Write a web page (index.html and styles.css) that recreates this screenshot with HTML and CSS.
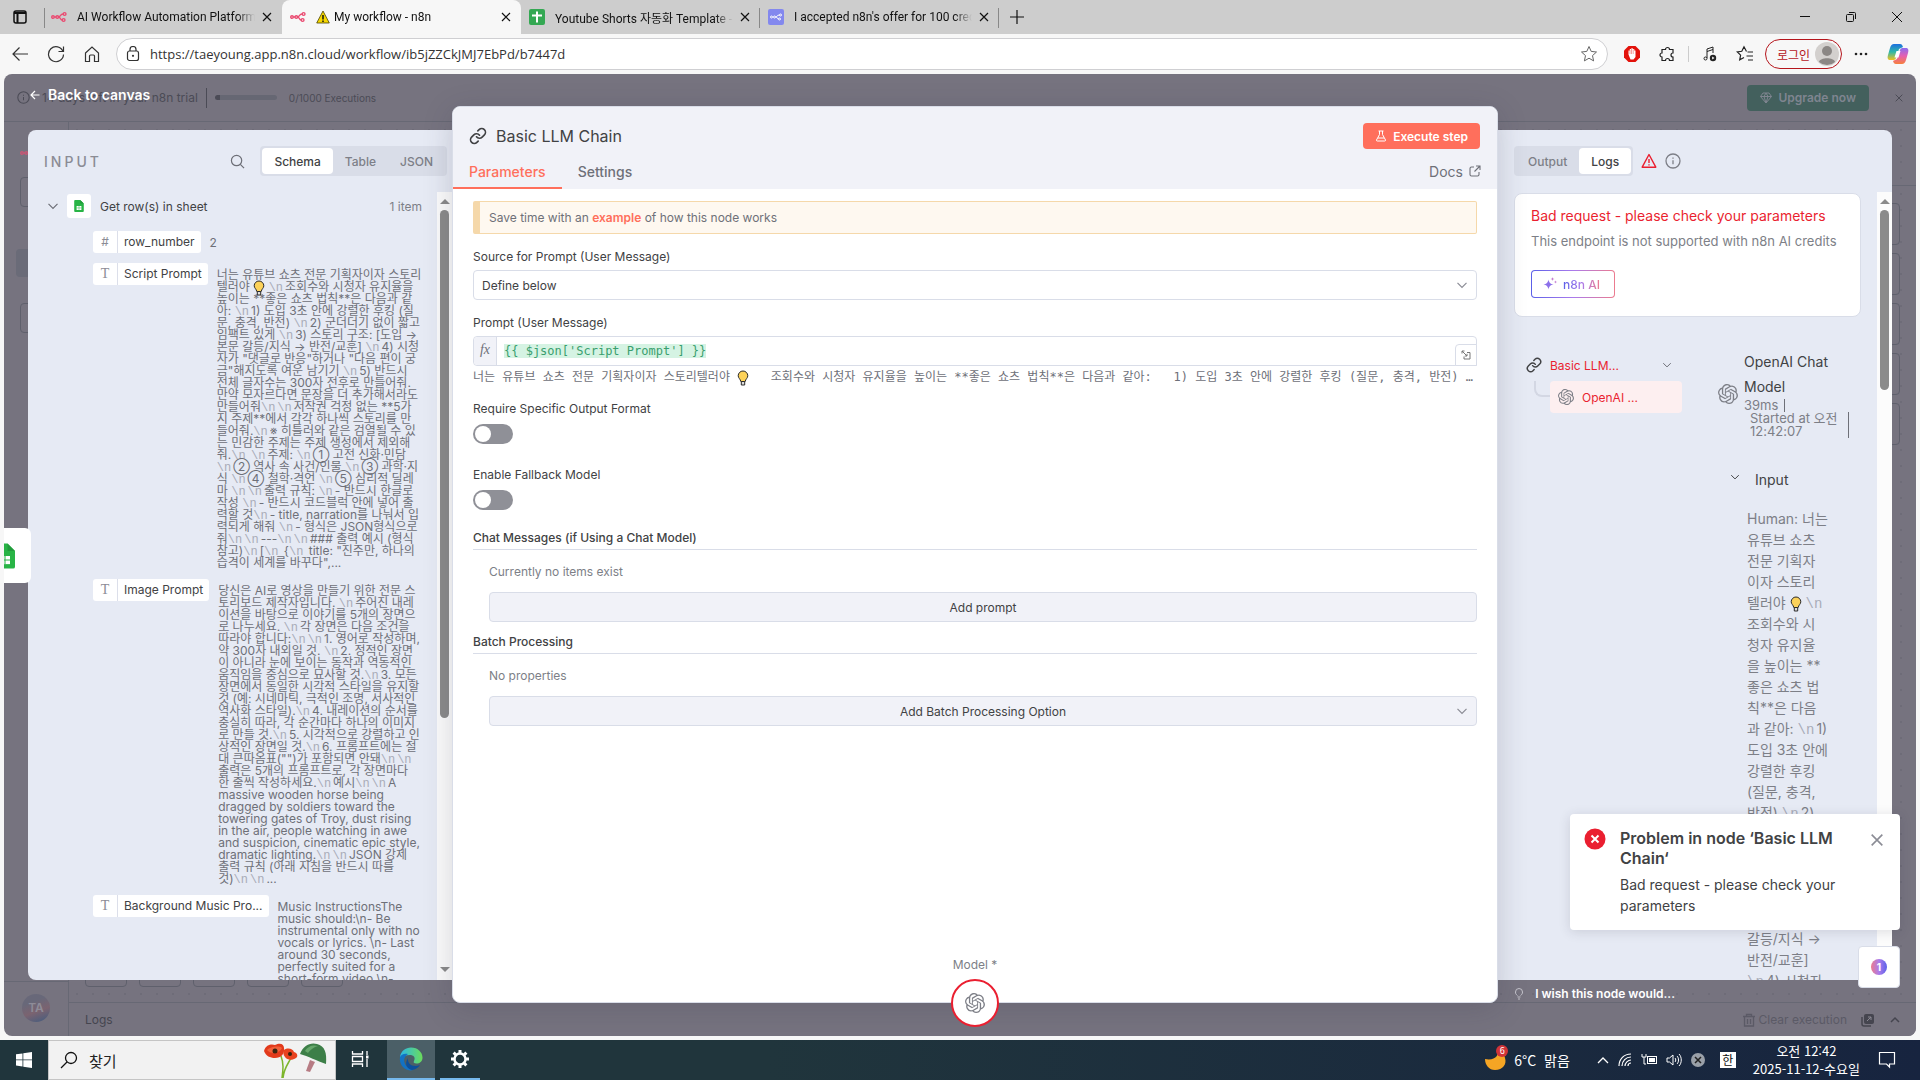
FILE: index.html
```html
<!DOCTYPE html>
<html lang="ko">
<head>
    <meta charset="UTF-8">
    <meta name="viewport" content="width=device-width, initial-scale=1.0">
    <title>My workflow - n8n</title>
    <link rel="stylesheet" href="styles.css">
</head>
<body>
    <!-- Shared icons -->
    <svg class="sprite" aria-hidden="true">
        <defs>
            <linearGradient id="aiGrad" x1="0" y1="0" x2="1" y2="0"><stop offset="0" stop-color="#5b60e8"/><stop offset=".5" stop-color="#aa7bec"/><stop offset="1" stop-color="#ec7b8e"/></linearGradient>
            <linearGradient id="edgeGrad" x1="0" y1="0" x2="1" y2="0"><stop offset="0" stop-color="#2bb7e8"/><stop offset="1" stop-color="#6bdc5a"/></linearGradient>
            <linearGradient id="copGrad" x1="0" y1="0" x2="0" y2="1"><stop offset="0" stop-color="#1c6fe0"/><stop offset=".5" stop-color="#2fb8a8"/><stop offset="1" stop-color="#f2c220"/></linearGradient>
            <linearGradient id="copGrad2" x1="0" y1="0" x2="0" y2="1"><stop offset="0" stop-color="#8a6cf0"/><stop offset=".5" stop-color="#e65fb0"/><stop offset="1" stop-color="#f7803c"/></linearGradient>
        </defs>
        <symbol id="n8n" viewBox="0 0 16 16"><g fill="none" stroke="#ea4b71" stroke-width="1.4"><circle cx="2" cy="8" r="1.3"/><circle cx="6.3" cy="8" r="1.3"/><circle cx="13.6" cy="5" r="1.4"/><circle cx="12.6" cy="11" r="1.4"/><path d="M3.3 8H5M7.6 8c2 0 1.6-3 4.6-3M7.6 8c2 0 1.4 3 3.6 3"/></g></symbol>
        <symbol id="sheet" viewBox="0 0 16 16"><rect width="16" height="16" rx="2" fill="#34a853"/><path d="M7 2.5h2v11H7zM3 5.5h10v2H3z" fill="#fff"/></symbol>
        <symbol id="gsheet" viewBox="0 0 16 20"><path d="M1.5 0H10l6 6v12.5a1.5 1.5 0 0 1-1.5 1.5h-13A1.5 1.5 0 0 1 0 18.5v-17A1.5 1.5 0 0 1 1.5 0z" fill="#28b446"/><path d="M10 0l6 6h-6z" fill="#219b3b"/><path d="M4 10h8v6.500H4z" fill="#fff"/><path d="M4 13.200h8M8 10v6.500" stroke="#28b446" stroke-width=".8"/></symbol>
        <symbol id="x" viewBox="0 0 12 12"><path d="M2 2l8 8M10 2l-8 8" fill="none" stroke="currentColor" stroke-width="1.2"/></symbol>
        <symbol id="down" viewBox="0 0 12 12"><path d="M1.500 3.800L6 8.300l4.500-4.500" fill="none" stroke="currentColor" stroke-width="1.200"/></symbol>
        <symbol id="link" viewBox="0 0 24 24"><g fill="none" stroke="currentColor" stroke-width="2.200" stroke-linecap="round"><path d="M10 13a5 5 0 0 0 7.540.540l3-3a5 5 0 0 0-7.070-7.070l-1.720 1.710"/><path d="M14 11a5 5 0 0 0-7.540-.540l-3 3a5 5 0 0 0 7.070 7.070l1.710-1.710"/></g></symbol>
        <symbol id="openai" viewBox="0 0 24 24"><path fill="currentColor" d="M22.2819 9.8211a5.9847 5.9847 0 0 0-.5157-4.9108 6.0462 6.0462 0 0 0-6.5098-2.9A6.0651 6.0651 0 0 0 4.9807 4.1818a5.9847 5.9847 0 0 0-3.9977 2.9 6.0462 6.0462 0 0 0 .7427 7.0966 5.98 5.98 0 0 0 .511 4.9107 6.051 6.051 0 0 0 6.5146 2.9001A5.9847 5.9847 0 0 0 13.2599 24a6.0557 6.0557 0 0 0 5.7718-4.2058 5.9894 5.9894 0 0 0 3.9977-2.9001 6.0557 6.0557 0 0 0-.7475-7.0729zm-9.022 12.6081a4.4755 4.4755 0 0 1-2.8764-1.0408l.1419-.0804 4.7783-2.7582a.7948.7948 0 0 0 .3927-.6813v-6.7369l2.02 1.1686a.071.071 0 0 1 .038.052v5.5826a4.504 4.504 0 0 1-4.4945 4.4944zm-9.6607-4.1254a4.4708 4.4708 0 0 1-.5346-3.0137l.142.0852 4.783 2.7582a.7712.7712 0 0 0 .7806 0l5.8428-3.3685v2.3324a.0804.0804 0 0 1-.0332.0615L9.74 19.9502a4.4992 4.4992 0 0 1-6.1408-1.6464zM2.3408 7.8956a4.485 4.485 0 0 1 2.3655-1.9728V11.6a.7664.7664 0 0 0 .3879.6765l5.8144 3.3543-2.0201 1.1685a.0757.0757 0 0 1-.071 0l-4.8303-2.7865A4.504 4.504 0 0 1 2.3408 7.872zm16.5963 3.8558L13.1038 8.364 15.1192 7.2a.0757.0757 0 0 1 .071 0l4.8303 2.7913a4.4944 4.4944 0 0 1-.6765 8.1042v-5.6772a.79.79 0 0 0-.407-.667zm2.0107-3.0231l-.142-.0852-4.7735-2.7818a.7759.7759 0 0 0-.7854 0L9.409 9.2297V6.8974a.0662.0662 0 0 1 .0284-.0615l4.8303-2.7866a4.4992 4.4992 0 0 1 6.6802 4.66zM8.3065 12.863l-2.02-1.1638a.0804.0804 0 0 1-.038-.0567V6.0742a4.4992 4.4992 0 0 1 7.3757-3.4537l-.142.0805L8.704 5.459a.7948.7948 0 0 0-.3927.6813zm1.0976-2.3654l2.602-1.4998 2.6069 1.4998v2.9994l-2.5974 1.4997-2.6067-1.4997Z"/></symbol>
        <symbol id="bulb" viewBox="0 0 12 16"><path d="M6 1a4.800 4.800 0 0 1 4.800 4.800c0 2.200-2.200 3.200-2.600 5.700H3.800C3.400 9 1.200 8 1.200 5.800A4.800 4.800 0 0 1 6 1z" fill="#fcd25a" stroke="#2a2a2a"/><path d="M4.300 11.500h3.400v3.500H4.300z" fill="#ddd" stroke="#2a2a2a"/></symbol>
        <symbol id="info" viewBox="0 0 16 16"><g fill="none" stroke="currentColor" stroke-width="1.300"><circle cx="8" cy="8" r="7"/><path d="M8 7.300v4M8 4.500v1.300"/></g></symbol>
        <symbol id="search" viewBox="0 0 16 16"><g fill="none" stroke="currentColor" stroke-width="1.300"><circle cx="7" cy="7" r="5.500"/><path d="M11 11l4 4"/></g></symbol>
    </svg>

    <div class="browser">
        <!-- Tab strip -->
        <div class="tabstrip">
            <button class="tab-actions" aria-label="Tab actions"><svg width="14" height="14" viewBox="0 0 14 14"><rect x="1" y="1" width="12" height="12" rx="2" fill="none" stroke="#111" stroke-width="1.500"/><path d="M1 3h12M4.500 3v10" stroke="#111" stroke-width="2"/></svg></button>
            <div class="btab first">
                <svg class="fav"><use href="#n8n"/></svg><span class="btab-title">AI Workflow Automation Platform</span>
                <button aria-label="Close tab"><svg><use href="#x"/></svg></button>
            </div>
            <div class="btab current">
                <svg class="fav"><use href="#n8n"/></svg>
                <svg class="warn" viewBox="0 0 14 14"><path d="M7 1l6.300 12H.7z" fill="#f7d800" stroke="#4a4200" stroke-width=".8"/><path d="M7 5v4.500M7 10.500v1.500" stroke="#111" stroke-width="1.500"/></svg>
                <span class="btab-title">My workflow - n8n</span>
                <button aria-label="Close tab"><svg><use href="#x"/></svg></button>
            </div>
            <div class="btab">
                <svg class="fav"><use href="#sheet"/></svg><span class="btab-title">Youtube Shorts 자동화 Template - </span>
                <button aria-label="Close tab"><svg><use href="#x"/></svg></button>
            </div>
            <div class="btab">
                <svg class="fav" viewBox="0 0 16 16"><rect width="16" height="16" rx="2" fill="#8388ee"/><g fill="none" stroke="#fff"><circle cx="3.500" cy="8" r="1"/><circle cx="6.500" cy="8" r="1"/><circle cx="12.500" cy="6" r="1"/><circle cx="11.500" cy="10" r="1"/><path d="M7.500 8c2 0 1-2 4-2M8 8c1.500 0 1 2 2.500 2"/></g></svg>
                <span class="btab-title">I accepted n8n's offer for 100 credits</span>
                <button aria-label="Close tab"><svg><use href="#x"/></svg></button>
            </div>
            <button class="new-tab" aria-label="New tab"><svg width="16" height="16" viewBox="0 0 16 16"><path d="M8 1v14M1 8h14" stroke="#111" stroke-width="1.200"/></svg></button>
            <div class="win-controls">
                <button aria-label="Minimize"><svg width="12" height="12" viewBox="0 0 12 12"><path d="M1 5.500h10" stroke="#111"/></svg></button>
                <button aria-label="Restore"><svg width="12" height="12" viewBox="0 0 12 12"><g fill="none" stroke="#111"><rect x="1.500" y="3.500" width="7" height="7" rx="1"/><path d="M4 1.500h5.500a1 1 0 0 1 1 1V8"/></g></svg></button>
                <button aria-label="Close"><svg width="12" height="12" viewBox="0 0 12 12"><path d="M1 1l10 10M11 1L1 11" stroke="#111"/></svg></button>
            </div>
        </div>

        <!-- Address bar -->
        <div class="toolbar">
            <div class="nav-buttons">
                <button aria-label="Back"><svg viewBox="0 0 18 18"><path d="M17 9H2M8.500 2.500L2 9l6.500 6.500"/></svg></button>
                <button aria-label="Reload"><svg viewBox="0 0 18 18"><path d="M16 6.500A7.500 7.500 0 1 0 16.500 9.500M16.500 1.500v5h-5"/></svg></button>
                <button aria-label="Home"><svg viewBox="0 0 18 18"><path d="M2.500 8L9 2l6.500 6v8.500h-4V11a1 1 0 0 0-1-1h-3a1 1 0 0 0-1 1v5.500h-4z"/></svg></button>
            </div>
            <div class="address">
                <svg width="14" height="16" viewBox="0 0 14 16"><g fill="none" stroke="#333" stroke-width="1.200"><rect x="1.500" y="5" width="11" height="9.500" rx="2"/><path d="M4 5V3.500a3 3 0 0 1 6 0V5"/></g><circle cx="7" cy="9.800" r="1.100" fill="#333"/></svg>
                <input type="text" aria-label="Address" value="https://taeyoung.app.n8n.cloud/workflow/ib5jZZCkJMJ7EbPd/b7447d">
                <svg width="18" height="18" viewBox="0 0 18 18"><path d="M9 1.500l2.200 4.900 5.300.6-4 3.600 1.100 5.300L9 13.200l-4.600 2.700 1.100-5.300-4-3.600 5.300-.6z" fill="none" stroke="#666"/></svg>
            </div>
            <div class="extensions">
                <svg width="18" height="18" viewBox="0 0 18 18"><path d="M5.500 1h7L17 5.500v7L12.500 17h-7L1 12.500v-7z" fill="#e3120b"/><path d="M5.500 9.500V5.500h1.300V4h1.500v-.800h1.500V4h1.500v1.500h1.200V12l-2 2.500h-3z" fill="#fff"/><path d="M7 5v4M8.500 4v5M10.200 4.500V9" stroke="#e3120b" stroke-width=".4"/></svg>
                <svg width="18" height="18" viewBox="0 0 18 18"><path d="M3 4.500h3.500a2 2 0 1 1 4 0H14V8a2 2 0 0 0 0 4v3.500h-3.500a2 2 0 0 0-4 0H3V12a2 2 0 0 1 0-4z" fill="none" stroke="#222" stroke-width="1.200"/></svg>
                <i class="bar-sep"></i>
                <svg width="18" height="18" viewBox="0 0 18 18"><g fill="none" stroke="#222"><path d="M7 13V4l6-2v6M7 6.500l6-2"/><circle cx="5.500" cy="13.500" r="1.500"/></g><circle cx="13" cy="13" r="3.200" fill="#222"/><path d="M12.200 11.500v3l2.300-1.500z" fill="#fff"/></svg>
                <svg width="18" height="18" viewBox="0 0 18 18"><path d="M10.500 6.500L8 1.800 5.800 6.300l-4.500.6 3.300 3.200-.9 4.700L8 12.500M11.500 7H17M10.500 11H17M12 15h5" fill="none" stroke="#222" stroke-width="1.200"/></svg>
                <button class="login">로그인 <svg width="24" height="24" viewBox="0 0 24 24"><circle cx="12" cy="12" r="12" fill="#d3d0ce"/><circle cx="12" cy="9" r="5" fill="#8b8785"/><path d="M4 20c1-5 15-5 16 0a12 12 0 0 1-16 0z" fill="#8b8785"/></svg></button>
                <svg width="16" height="16" viewBox="0 0 16 16"><g fill="#222"><circle cx="3" cy="8" r="1.300"/><circle cx="8" cy="8" r="1.300"/><circle cx="13" cy="8" r="1.300"/></g></svg>
                <svg width="22" height="22" viewBox="0 0 22 22"><path d="M7 1h6c2 0 2.500 1.500 3 3l-4 2-3 9c-.5 1.500-1.500 2-3 2H3c-2 0-3-1.500-2-5l2-7c.8-2.500 2-4 4-4z" fill="url(#copGrad)"/><path d="M15 21H9c-2 0-2.500-1.500-3-3l4-2 3-9c.5-1.500 1.500-2 3-2h3c2 0 3 1.500 2 5l-2 7c-.8 2.500-2 4-4 4z" fill="url(#copGrad2)"/><path d="M9.500 8h4l-2 6.500h-4z" fill="#fff"/></svg>
            </div>
        </div>

        <!-- Page -->
        <div class="page">
            <!-- Dimmed editor behind the modal -->
            <div class="editor">
                <div class="trial">
                    <svg class="trial-info"><use href="#info"/></svg>
                    <span class="trial-text">14 days left in your n8n trial</span>
                    <span class="trial-sep"></span>
                    <span class="trial-progress"></span>
                    <span class="trial-count">0/1000 Executions</span>
                    <button class="upgrade"><svg width="12" height="12" viewBox="0 0 12 12"><path d="M3 1h6l2.500 3.500L6 11 .5 4.500zM.5 4.500h11M4 4.500L6 11l2-6.500L6 1z" fill="none" stroke="currentColor"/></svg>Upgrade now</button>
                    <button class="trial-close" aria-label="Dismiss"><svg><use href="#x"/></svg></button>
                </div>
                <div class="editor-body">
                    <div class="sidebar">
                        <svg class="side-logo"><use href="#n8n"/></svg>
                        <i class="side-box"></i>
                        <i class="side-active"></i>
                        <i class="side-box"></i>
                        <div class="side-user"><span>TA</span></div>
                    </div>
                    <div class="canvas">
                        <div class="canvas-right"><i></i><i></i><i></i><i></i><i></i></div>
                        <div class="canvas-tools"><i></i><i></i><i></i><i></i><i></i></div>
                        <div class="logs-bar">
                            <span>Logs</span>
                            <button class="clear"><svg width="14" height="14" viewBox="0 0 14 14"><path d="M1 3.500h12M4.500 3.500v-2h5v2M2.500 3.500v9.500h9V3.500M5.500 6v5M8.500 6v5" fill="none" stroke="currentColor" stroke-width="1.300"/></svg>Clear execution</button>
                            <svg width="14" height="14" viewBox="0 0 14 14"><rect x="3" y="1" width="10" height="10" rx="2" fill="#45454f"/><path d="M1 4v7a2 2 0 0 0 2 2h7" fill="none" stroke="#45454f" stroke-width="1.500"/><path d="M6 8l4-4M7 4h3v3" stroke="#8a8892" fill="none"/></svg>
                            <svg width="12" height="12" viewBox="0 0 12 12"><path d="M2 8l4-4 4 4" fill="none" stroke="#45454f" stroke-width="1.500"/></svg>
                        </div>
                    </div>
                </div>
            </div>

            <a class="back" href="#"><svg width="10" height="10" viewBox="0 0 10 10"><path d="M9.500 5H1M5 1L1 5l4 4" fill="none" stroke="#fff" stroke-width="1.200"/></svg>Back to canvas</a>
            <button class="prev-node" aria-label="Get row(s) in sheet"><svg width="20" height="28"><use href="#gsheet"/></svg></button>

            <div class="modal">
                <!-- Input panel -->
                <section class="side-panel input-panel">
                    <div class="panel-head">
                        <h2>INPUT</h2>
                        <svg class="icon-search"><use href="#search"/></svg>
                        <div class="radios"><button class="on">Schema</button><button>Table</button><button>JSON</button></div>
                    </div>
                    <div class="panel-scroll">
                        <div class="schema">
                            <div class="schema-node">
                                <svg class="chev"><use href="#down"/></svg>
                                <span class="node-icon"><svg width="10" height="12"><use href="#gsheet"/></svg></span>
                                <span class="node-name">Get row(s) in sheet</span>
                                <span class="items">1 item</span>
                            </div>
                            <div class="row"><span class="pill"><i>#</i><b>row_number</b></span><p>2</p></div>
                            <div class="row"><span class="pill"><i class="type">T</i><b>Script Prompt</b></span>
                                <p>너는 유튜브 쇼츠 전문 기획자이자 스토리<br>
                                텔러야 <svg class="bulb"><use href="#bulb"/></svg> <s>\n</s>조회수와 시청자 유지율을<br>
                                높이는 **좋은 쇼츠 법칙**은 다음과 같<br>
                                아: <s>\n</s>1) 도입 3초 안에 강렬한 후킹 (질<br>
                                문, 충격, 반전) <s>\n</s>2) 군더더기 없이 짧고<br>
                                임팩트 있게 <s>\n</s>3) 스토리 구조: [도입 →<br>
                                본문 갈등/지식 → 반전/교훈] <s>\n</s>4) 시청<br>
                                자가 "댓글로 반응"하거나 "다음 편이 궁<br>
                                금"해지도록 여운 남기기 <s>\n</s>5) 반드시<br>
                                전체 글자수는 300자 전후로 만들어줘.<br>
                                만약 모자르다면 문장을 더 추가해서라도<br>
                                만들어줘<s>\n</s><s>\n</s>저작권 걱정 없는 **5가<br>
                                지 주제**에서 각각 하나씩 스토리를 만<br>
                                들어줘.<s>\n</s>※ 히틀러와 같은 검열될 수 있<br>
                                는 민감한 주제는 주제 생성에서 제외해<br>
                                줘.<s>\n</s> <s>\n</s>주제: <s>\n</s>① 고전 신화·민담<br>
                                <s>\n</s>② 역사 속 사건/인물 <s>\n</s>③ 과학·지<br>
                                식 <s>\n</s>④ 철학·격언 <s>\n</s>⑤ 심리적 딜레<br>
                                마 <s>\n</s><s>\n</s>출력 규칙: <s>\n</s>- 반드시 한글로<br>
                                작성 <s>\n</s>- 반드시 코드블럭 안에 넣어 출<br>
                                력할 것<s>\n</s>- title, narration를 나눠서 입<br>
                                력되게 해줘 <s>\n</s>- 형식은 JSON형식으로<br>
                                줘<s>\n</s><s>\n</s>---<s>\n</s><s>\n</s>### 출력 예시 (형식<br>
                                참고)<s>\n</s>[<s>\n</s> {<s>\n</s> title: "진주만, 하나의<br>
                                습격이 세계를 바꾸다",...</p>
                            </div>
                            <div class="row"><span class="pill"><i class="type">T</i><b>Image Prompt</b></span>
                                <p>당신은 AI로 영상을 만들기 위한 전문 스<br>
                                토리보드 제작자입니다. <s>\n</s>주어진 내레<br>
                                이션을 바탕으로 이야기를 5개의 장면으<br>
                                로 나누세요. <s>\n</s>각 장면은 다음 조건을<br>
                                따라야 합니다:<s>\n</s><s>\n</s>1. 영어로 작성하며,<br>
                                약 300자 내외일 것. <s>\n</s>2. 정적인 장면<br>
                                이 아니라 눈에 보이는 동작과 역동적인<br>
                                움직임을 중심으로 묘사할 것.<s>\n</s>3. 모든<br>
                                장면에서 동일한 시각적 스타일을 유지할<br>
                                것 (예: 시네마틱, 극적인 조명, 서사적인<br>
                                역사화 스타일).<s>\n</s>4. 내레이션의 순서를<br>
                                충실히 따라, 각 순간마다 하나의 이미지<br>
                                로 만들 것.<s>\n</s>5. 시각적으로 강렬하고 인<br>
                                상적인 장면일 것.<s>\n</s>6. 프롬프트에는 절<br>
                                대 큰따옴표("")가 포함되면 안돼<s>\n</s><s>\n</s><br>
                                출력은 5개의 프롬프트로, 각 장면마다<br>
                                한 줄씩 작성하세요.<s>\n</s>예시<s>\n</s><s>\n</s>A<br>
                                massive wooden horse being<br>
                                dragged by soldiers toward the<br>
                                towering gates of Troy, dust rising<br>
                                in the air, people watching in awe<br>
                                and suspicion, cinematic epic style,<br>
                                dramatic lighting.<s>\n</s><s>\n</s>JSON 강제<br>
                                출력 규칙 (아래 지침을 반드시 따를<br>
                                것)<s>\n</s><s>\n</s>...</p>
                            </div>
                            <div class="row"><span class="pill"><i class="type">T</i><b>Background Music Pro...</b></span>
                                <p>Music InstructionsThe<br>music should:\n- Be<br>instrumental only with no<br>vocals or lyrics. \n- Last<br>around 30 seconds,<br>perfectly suited for a<br>short-form video.\n-</p>
                            </div>
                        </div>
                        <div class="scrollbar"><i class="up"></i><i class="thumb thumb-long"></i><i class="dn"></i></div>
                    </div>
                </section>

                <!-- Node parameters -->
                <section class="node-panel">
                    <div class="node-head">
                        <div class="node-title">
                            <svg width="18" height="18"><use href="#link"/></svg>
                            <h1>Basic LLM Chain</h1>
                            <button class="execute"><svg width="12" height="12" viewBox="0 0 12 12"><path d="M3.500 1h5M4.500 1v3.500L1.500 10a.8.8 0 0 0 .7 1h7.600a.8.8 0 0 0 .7-1L7.500 4.500V1M3 8h6" fill="none" stroke="currentColor"/></svg>Execute step</button>
                        </div>
                        <div class="node-tabs">
                            <button class="on">Parameters</button><button>Settings</button>
                            <a href="#">Docs <svg width="12" height="12" viewBox="0 0 12 12"><path d="M5 2H2.500A1.500 1.500 0 0 0 1 3.500v6A1.500 1.500 0 0 0 2.500 11h6A1.500 1.500 0 0 0 10 9.500V7M7 1h4v4M11 1L5.500 6.500" fill="none" stroke="currentColor" stroke-width="1.100"/></svg></a>
                        </div>
                    </div>
                    <form class="node-body">
                        <div class="notice">Save time with an <a href="#">example</a> of how this node works</div>
                        <div class="field">
                            <label for="source">Source for Prompt (User Message)</label>
                            <div class="select-wrap"><select id="source"><option>Define below</option></select><svg><use href="#down"/></svg></div>
                        </div>
                        <div class="field">
                            <label for="prompt">Prompt (User Message)</label>
                            <div class="expression">
                                <span class="fx">fx</span>
                                <input id="prompt" type="text" value="{{ $json['Script Prompt'] }}">
                                <button type="button" aria-label="Expand"><svg width="10" height="10" viewBox="0 0 10 10"><path d="M6 2.500h3v6.500H3V6.500M1 3.500V1h2.500M1 1l5 5M6 3.800V6H3.800" fill="none" stroke="#777"/></svg></button>
                            </div>
                            <div class="preview">너는 유튜브 쇼츠 전문 기획자이자 스토리텔러야 <svg class="bulb"><use href="#bulb"/></svg>   조회수와 시청자 유지율을 높이는 **좋은 쇼츠 법칙**은 다음과 같아:   1) 도입 3초 안에 강렬한 후킹 (질문, 충격, 반전)   2) 군더더기 없이 짧고 임팩트 있게</div>
                        </div>
                        <div class="field">
                            <label for="format">Require Specific Output Format</label>
                            <input class="toggle" id="format" type="checkbox">
                        </div>
                        <div class="field">
                            <label for="fallback">Enable Fallback Model</label>
                            <input class="toggle" id="fallback" type="checkbox">
                        </div>
                        <div class="group">
                            <h3>Chat Messages (if Using a Chat Model)</h3>
                            <p>Currently no items exist</p>
                            <button class="add" type="button">Add prompt</button>
                        </div>
                        <div class="group">
                            <h3 id="batch">Batch Processing</h3>
                            <p>No properties</p>
                            <div class="select-wrap add-select"><select aria-labelledby="batch"><option>Add Batch Processing Option</option></select><svg><use href="#down"/></svg></div>
                        </div>
                    </form>
                    <div class="model"><span>Model *</span><button aria-label="OpenAI Chat Model"><svg width="20" height="20"><use href="#openai"/></svg></button></div>
                </section>

                <!-- Output panel -->
                <section class="side-panel output-panel">
                    <div class="panel-head">
                        <div class="radios"><button>Output</button><button class="on">Logs</button></div>
                        <svg class="alert" width="16" height="16" viewBox="0 0 16 16"><path d="M8 1.500l6.800 12.700H1.200zM8 6v4M8 11.300v1.300" fill="none" stroke="#ea1f30" stroke-width="1.400" stroke-linejoin="round"/></svg>
                        <svg class="icon-info"><use href="#info"/></svg>
                    </div>
                    <div class="panel-scroll">
                        <div class="logs">
                            <div class="error-card">
                                <h3>Bad request - please check your parameters</h3>
                                <p>This endpoint is not supported with n8n AI credits</p>
                                <button><svg width="14" height="14" viewBox="0 0 14 14"><path d="M5.500 2.500c.7 3.300 1.700 4.300 5 5-3.300.7-4.300 1.700-5 5-.7-3.300-1.700-4.300-5-5 3.300-.7 4.300-1.700 5-5z" fill="#8c70ea"/><path d="M9.500 0c.2 1.300.7 1.800 2 2-1.300.2-1.800.7-2 2-.2-1.300-.7-1.800-2-2 1.300-.2 1.800-.7 2-2zM12.500 3.500l.4 1.100 1.100.4-1.100.4-.4 1.100-.4-1.100-1.100-.4 1.100-.4z" fill="#c47bd0"/></svg><span>n8n AI</span></button>
                            </div>
                            <div class="log-view">
                                <div class="tree">
                                    <div class="tree-row"><svg width="16" height="16"><use href="#link"/></svg><span>Basic LLM...</span><svg class="tree-chev"><use href="#down"/></svg></div>
                                    <div class="tree-child"><i></i><div><svg width="16" height="16"><use href="#openai"/></svg><span>OpenAI ...</span></div></div>
                                </div>
                                <div class="details">
                                    <div class="details-head">
                                        <svg width="20" height="20"><use href="#openai"/></svg>
                                        <div>
                                            <h4>OpenAI Chat Model</h4>
                                            <div class="took">39ms</div>
                                            <div class="started">Started at 오전 12:42:07</div>
                                        </div>
                                    </div>
                                    <div class="io"><svg class="tree-chev"><use href="#down"/></svg>Input</div>
                                    <p>Human: 너는<br>유튜브 쇼츠<br>전문 기획자<br>이자 스토리<br>텔러야 <svg class="bulb"><use href="#bulb"/></svg> <s>\n</s><br>조회수와 시<br>청자 유지율<br>을 높이는 **<br>좋은 쇼츠 법<br>칙**은 다음<br>과 같아: <s>\n</s>1)<br>도입 3초 안에<br>강렬한 후킹<br>(질문, 충격,<br>반전) <s>\n</s>2)<br>군더더기 없<br>이 짧고 임팩<br>트 있게 <s>\n</s><br>3) 스토리 구<br>조: [도입 →<br>갈등/지식 →<br>반전/교훈]<br><s>\n</s>4) 시청자</p>
                                </div>
                            </div>
                        </div>
                        <div class="scrollbar"><i class="up"></i><i class="thumb thumb-short"></i></div>
                    </div>
                </section>
            </div>

            <a class="wish" href="#"><svg width="10" height="12" viewBox="0 0 10 12"><path d="M3.500 7.500C2 6.500 1.500 5.500 1.500 4a3.500 3.500 0 0 1 7 0c0 1.500-.5 2.500-2 3.500M3.500 9h3M4 11h2" fill="none" stroke="currentColor"/></svg>I wish this node would...</a>

            <div class="toast" role="alert">
                <svg width="22" height="22" viewBox="0 0 22 22"><circle cx="11" cy="11" r="10.500" fill="#ea1f30"/><path d="M7.500 7.500l7 7M14.500 7.500l-7 7" stroke="#fff" stroke-width="2"/></svg>
                <div><h2>Problem in node ‘Basic LLM Chain‘</h2><p>Bad request - please check your parameters</p></div>
                <button aria-label="Close"><svg><use href="#x"/></svg></button>
            </div>
            <button class="assistant" aria-label="Assistant"><span>1</span></button>
        </div>

        <!-- Windows taskbar -->
        <div class="taskbar">
            <button class="start" aria-label="Start"><svg width="16" height="16" viewBox="0 0 16 16"><path d="M0 2.300l6.500-.9v6.100H0zM7.300 1.200L16 0v7.500H7.300zM0 8.300h6.500v6.200L0 13.600zM7.300 8.300H16V16l-8.700-1.200z" fill="#fff"/></svg></button>
            <div class="find">
                <svg width="18" height="18" viewBox="0 0 18 18"><g fill="none" stroke="#111" stroke-width="1.300"><circle cx="11" cy="7" r="5.500"/><path d="M7 11l-6 6"/></g></svg>
                <input type="text" aria-label="찾기" placeholder="찾기">
                <svg width="66" height="36" viewBox="0 0 66 36"><path d="M18 14c3 8 2 14 1 22M28 16c-3 6-7 10-8 20" fill="none" stroke="#7cb52b" stroke-width="1.500"/><path d="M1 9C3 2 9 2 12 3c6-3 9 0 9 3 1 6-3 10-9 10C7 16 3 14 1 9z" fill="#e23a1c"/><path d="M4 8c3-3 12-5 15-2-2 5-11 7-15 2z" fill="#f2603a"/><circle cx="12" cy="9" r="2.500" fill="#3b2410"/><path d="M21 8c4-3 9-1 10 2 4 1 4 5 2 6-4 3-9 2-11-1-2-2-2-5-1-7z" fill="#e8421f"/><circle cx="27" cy="12" r="2" fill="#33230f"/><path d="M47 18l5 2-5 10-4-1z" fill="#b77c84"/><path d="M37 12C40 4 47 0 54 2c8 2 10 9 9 20-9-3-18-8-26-10z" fill="#3d7f48"/><path d="M42 9c4-6 9-6 13-5-4 1-8 4-10 7z" fill="#67a86c"/></svg>
            </div>
            <button class="task" aria-label="Task view"><svg width="18" height="18" viewBox="0 0 18 18"><path d="M1.500 1v3h10V1M1.500 17v-3h10v3M1.500 6.500h10v5h-10zM16 1v4M16 9v8" fill="none" stroke="#fff" stroke-width="1.300"/><path d="M15 5.500h2.500v3H15z" fill="#fff"/></svg></button>
            <button class="task open" aria-label="Edge"><svg width="24" height="24" viewBox="0 0 24 24"><path d="M1 10C2 4 6.500.5 12 .5c7 0 11.500 5 11.500 10 0 4-3 6-6 6-2.500 0-3.500-1-2.500-2.500C17 10 14 8 11 8c-4 0-8 2-10 2z" fill="url(#edgeGrad)"/><path d="M1 10C3 6 7 6.500 9 7c-3 2-4.500 5-3.500 8.500 1 4 5 7 9.500 7-2 1-4 1.200-6 .5C3.500 21.500 0 16 1 10z" fill="#1372c4"/><path d="M9 11c-1 6 5 10 12 7-2 3-5 4.700-8 5-5-1-8-6-4-12z" fill="#0d4f9b"/></svg></button>
            <button class="task running" aria-label="Settings"><svg width="20" height="20" viewBox="0 0 20 20"><circle cx="10" cy="10" r="5.500" fill="none" stroke="#fff" stroke-width="2.500"/><path d="M10 1v3M10 16v3M1 10h3M16 10h3M3.600 3.600l2.200 2.200M14.200 14.200l2.200 2.200M16.400 3.600l-2.200 2.200M5.800 14.200l-2.200 2.200" stroke="#fff" stroke-width="3"/></svg></button>
            <div class="tray">
                <div class="weather"><span class="moon"><svg width="24" height="24" viewBox="0 0 24 24"><path d="M13 1c3 6-2 12-12 10 0 6 4 11 10 11C19 22 23 16 21 10 20 5 17 2 13 1z" fill="#f5a524"/></svg><b>6</b></span>6°C&nbsp; 맑음</div>
                <svg width="12" height="12" viewBox="0 0 12 12"><path d="M1 9l5-5 5 5" fill="none" stroke="#fff" stroke-width="1.300"/></svg>
                <svg width="14" height="14" viewBox="0 0 14 14"><g fill="none" stroke="#fff" stroke-width="1.200"><path d="M1 13C1 6 6 1 13 1M4 13c0-5 4-9 9-9M7 13c0-3 3-6 6-6M10 13c0-2 1-3 3-3"/></g></svg>
                <svg width="16" height="14" viewBox="0 0 16 14"><path d="M1 1v3h4V1M3 4v7h2" fill="none" stroke="#fff"/><rect x="6.500" y="3.500" width="9" height="7" fill="none" stroke="#fff"/><path d="M8 5h6v4H8z" fill="#fff"/></svg>
                <svg width="16" height="14" viewBox="0 0 16 14"><path d="M1 5h2.500L7 2v10L3.500 9H1zM9 5c1 1 1 3 0 4M11 3c2 2 2 6 0 8M13 1c3 3 3 9 0 12" fill="none" stroke="#fff"/></svg>
                <svg width="14" height="14" viewBox="0 0 14 14"><circle cx="7" cy="7" r="7" fill="#9aa0a8"/><path d="M4 4l6 6M10 4l-6 6" stroke="#222" stroke-width="1.500"/></svg>
                <span class="ime">한</span>
                <div class="clock">오전 12:42<br>2025-11-12-수요일</div>
                <svg width="18" height="18" viewBox="0 0 18 18"><path d="M1.500 1.500h15v11.500h-5v3l-3-3h-7z" fill="none" stroke="#fff" stroke-width="1.200"/></svg>
            </div>
        </div>
    </div>
</body>
</html>
```
FILE: styles.css
```css
/* General */
* {
    box-sizing: border-box;
}

body {
    margin: 0;
    font-family: Inter, "Noto Sans CJK KR", sans-serif;
    font-size: 12px;
    color: #414244;
    background: #f7f7f7;
}

h1, h2, h3, h4, p {
    margin: 0;
    font-weight: 400;
}

button, input, select {
    font: inherit;
    color: inherit;
    border: none;
    background: none;
    padding: 0;
    margin: 0;
    outline: none;
}

a {
    color: inherit;
    text-decoration: none;
}

svg {
    display: block;
    flex-shrink: 0;
}

i, b {
    font-style: normal;
    font-weight: 400;
}

.sprite {
    position: absolute;
    width: 0;
    height: 0;
}

.browser {
    display: flex;
    flex-direction: column;
    height: 100vh;
    overflow: hidden;
}

/* Tab strip */
.tabstrip {
    display: flex;
    align-items: center;
    height: 34px;
    background: #cdcdcd;
    font-family: Roboto, "Noto Sans CJK KR", sans-serif;
    color: #111;
}

.tab-actions {
    width: 43px;
    padding-left: 13px;
}

.btab {
    display: flex;
    align-items: center;
    width: 239px;
    height: 34px;
    padding: 0 9px 0 8px;
    position: relative;
}

.btab:after {
    content: "";
    position: absolute;
    right: 0;
    top: 8px;
    height: 20px;
    border-right: 1px solid #888;
}

.btab.first:before {
    content: "";
    position: absolute;
    left: 1px;
    top: 8px;
    height: 20px;
    border-right: 1px solid #888;
}

.btab.first:after, .btab.current:after {
    display: none;
}

.btab.current {
    background: #f7f7f7;
    border-radius: 8px 8px 0 0;
}

.fav {
    width: 16px;
    height: 16px;
    margin-right: 10px;
}

.warn {
    width: 14px;
    height: 14px;
    margin-right: 4px;
}

.btab-title {
    flex: 1;
    overflow: hidden;
    white-space: nowrap;
    mask-image: linear-gradient(to right, #000 90%, transparent);
}

.btab button svg {
    width: 12px;
    height: 12px;
    margin-left: 6px;
}

.new-tab {
    padding-left: 10px;
}

.win-controls {
    display: flex;
    margin-left: auto;
}

.win-controls button {
    width: 46px;
    display: flex;
    justify-content: center;
}

/* Toolbar */
.toolbar {
    display: flex;
    align-items: center;
    height: 40px;
}

.nav-buttons {
    display: flex;
    gap: 18px;
    padding: 0 15px 0 11px;
}

.nav-buttons svg {
    width: 18px;
    height: 18px;
    fill: none;
    stroke: #333;
    stroke-width: 1.2px;
}

.address {
    flex: 1;
    display: flex;
    align-items: center;
    height: 32px;
    padding: 0 9px;
    border: 1px solid #cfcfd2;
    border-radius: 16px;
    background: #fff;
}

.address input {
    flex: 1;
    padding-left: 10px;
    font-family: "Open Sans", sans-serif;
    font-size: 13px;
    color: #333;
}

.extensions {
    display: flex;
    align-items: center;
    gap: 18px;
    padding: 0 11px 0 15px;
}

.bar-sep {
    height: 16px;
    margin: 0 -7px;
    border-left: 1px solid #ccc;
}

.login {
    display: flex;
    align-items: center;
    gap: 5px;
    height: 30px;
    margin: 0 -7px;
    padding: 0 2px 0 11px;
    border: 1px solid #b5151c;
    border-radius: 15px;
    color: #b5151c;
    white-space: nowrap;
}

/* Page */
.page {
    position: relative;
    flex: 1;
    min-height: 0;
    margin: 0 4px 4px;
    border-radius: 8px;
    overflow: hidden;
    background: #76737f;
}

.editor {
    position: absolute;
    inset: 0;
    display: flex;
    flex-direction: column;
    color: #4b4b56;
}

.trial {
    display: flex;
    align-items: center;
    height: 48px;
    padding: 0 12px 0 13px;
    border-bottom: 1px solid #676874;
}

.trial-info {
    width: 13px;
    height: 13px;
    margin-right: 12px;
}

.trial-text {
    font-size: 12px;
}

.trial-sep {
    height: 20px;
    margin: 0 8px;
    border-left: 1px solid #4b4b56;
}

.trial-progress {
    width: 62px;
    height: 5px;
    margin-right: 12px;
    border-radius: 3px;
    background: linear-gradient(to right, #4b4b56 5px, #666773 5px);
}

.trial-count {
    font-size: 10px;
}

.upgrade {
    display: flex;
    align-items: center;
    gap: 6px;
    height: 26px;
    margin-left: auto;
    padding: 0 13px;
    border-radius: 4px;
    background: #43605d;
    color: #7f8590;
    font-weight: 600;
}

.trial-close {
    margin-left: 25px;
}

.trial-close svg {
    width: 10px;
    height: 10px;
}

.editor-body {
    flex: 1;
    display: flex;
}

.sidebar {
    display: flex;
    flex-direction: column;
    width: 65px;
    padding: 23px 12px 0 16px;
    border-right: 1px solid #676874;
}

.side-logo {
    width: 16px;
    height: 16px;
    margin-bottom: 16px;
    opacity: .7;
}

.side-box {
    height: 30px;
    border: 1px solid #5f606c;
    border-radius: 4px;
}

.side-active {
    height: 28px;
    margin: 42px 0 26px -4px;
    border-radius: 4px;
    background: #6a6b78;
}

.side-user {
    margin: auto -12px 0 -16px;
    padding: 12px 0 14px 18px;
    border-top: 1px solid #676874;
}

.side-user span {
    display: block;
    width: 28px;
    border-radius: 50%;
    background: linear-gradient(160deg, #686879 30%, #7b6370 60%, #405c80);
    color: #8e8c98;
    font-weight: 600;
    line-height: 28px;
    text-align: center;
}

.canvas {
    flex: 1;
    display: flex;
    flex-direction: column;
    background: radial-gradient(#6e6c78 1px, transparent 1px) 0 0 / 16px 16px;
}

.canvas-right {
    display: flex;
    flex-direction: column;
    align-items: flex-end;
    gap: 8px;
    margin-top: 63px;
    padding: 17px 16px 0 0;
    border-top: 1px solid #676874;
}

.canvas-right i, .canvas-tools i {
    width: 42px;
    height: 42px;
    border: 1px solid #5f606c;
    border-radius: 4px;
}

.canvas-tools {
    display: flex;
    gap: 12px;
    margin-top: auto;
    padding: 0 0 15px 16px;
}

.logs-bar {
    display: flex;
    align-items: center;
    gap: 14px;
    height: 34px;
    padding: 0 15px 0 16px;
    border-top: 1px solid #676874;
    background: #76737f;
    color: #45454f;
}

.clear {
    display: flex;
    align-items: center;
    gap: 3px;
    margin-left: auto;
    color: #5b5a66;
}

/* Modal */
.modal {
    position: relative;
    display: grid;
    grid-template-columns: 424px minmax(0, 1fr) 394px;
    height: 100%;
    padding: 32px 24px 33px;
}

.back {
    position: absolute;
    left: 26px;
    top: 12px;
    display: flex;
    align-items: center;
    gap: 8px;
    color: #fff;
    font-size: 14px;
    font-weight: 600;
    line-height: 18px;
}

.prev-node {
    position: absolute;
    left: 0;
    top: 454px;
    z-index: 2;
    width: 27px;
    height: 55px;
    border-radius: 0 6px 6px 0;
    background: #fff;
}

.prev-node svg {
    margin-left: -9px;
}

.side-panel {
    display: flex;
    flex-direction: column;
    min-height: 0;
    margin: 24px 0 23px;
    background: #e6eaf4;
    overflow: hidden;
}

.input-panel {
    border-radius: 8px 0 0 8px;
}

.output-panel {
    border-radius: 0 8px 0 0;
}

.panel-head {
    display: flex;
    align-items: center;
    padding: 16px 5px 16px 16px;
}

.panel-head h2 {
    font-size: 14px;
    font-weight: 500;
    letter-spacing: 3px;
    color: #8b8c95;
}

.icon-search {
    width: 15px;
    height: 15px;
    margin: 0 15px 0 auto;
    color: #6e7078;
}

.radios {
    display: flex;
    height: 30px;
    padding: 2px;
    border-radius: 4px;
    background: #d9dde8;
}

.radios button {
    padding: 0 12px;
    border-radius: 4px;
    color: #7d7f87;
    font-weight: 500;
}

.radios .on {
    background: #fff;
    color: #414244;
}

.panel-scroll {
    flex: 1;
    display: flex;
    min-height: 0;
}

.scrollbar {
    display: flex;
    flex-direction: column;
    align-items: center;
    width: 15px;
    padding: 7px 0 8px;
    background: #fcfcfc;
}

.up {
    border: 5px solid transparent;
    border-top: 0;
    border-bottom: 5px solid #8b8b8b;
}

.dn {
    margin-top: auto;
    border: 5px solid transparent;
    border-bottom: 0;
    border-top: 5px solid #8b8b8b;
}

.thumb {
    width: 9px;
    margin-top: 6px;
    border-radius: 5px;
    background: #8b8b8b;
}

.thumb-long {
    height: 508px;
}

.thumb-short {
    height: 180px;
}

/* Schema */
.schema {
    flex: 1;
    min-width: 0;
    padding: 2px 15px 0 18px;
    overflow: hidden;
}

.schema-node {
    display: flex;
    align-items: center;
    margin-bottom: 13px;
}

.chev {
    width: 12px;
    height: 12px;
    margin: 0 8px 0 1px;
    color: #6e7078;
}

.node-icon {
    display: flex;
    align-items: center;
    justify-content: center;
    width: 24px;
    height: 24px;
    margin-right: 9px;
    border-radius: 3px;
    background: #fff;
}

.items {
    margin-left: auto;
    color: #7d7f87;
}

.row {
    display: flex;
    align-items: flex-start;
    gap: 9px;
    margin-left: 47px;
    padding-bottom: 10px;
}

.pill {
    display: flex;
    flex-shrink: 0;
    height: 22px;
    border-radius: 3px;
    background: #fff;
    line-height: 22px;
}

.pill i {
    width: 25px;
    border-right: 1px solid #dcdfea;
    color: #8b8c95;
    text-align: center;
}

.pill .type {
    font-family: "Liberation Serif", serif;
    font-size: 14px;
}

.pill b {
    padding: 0 6px;
}

.row p {
    padding-top: 6px;
    line-height: 12px;
    color: #6e7078;
    white-space: nowrap;
}

/* Escaped line breaks; zero line-height keeps rows even */
s {
    padding-right: 2px;
    font-family: "Liberation Mono", monospace;
    line-height: 0;
    color: #a9acb8;
    text-decoration: none;
}

.bulb {
    display: inline-block;
    width: 12px;
    height: 16px;
    margin: -4px 0;
    vertical-align: middle;
}

/* Node panel */
.node-panel {
    position: relative;
    z-index: 1;
    display: flex;
    flex-direction: column;
    border: 1px solid #d9dde8;
    border-radius: 8px;
    background: #fff;
    box-shadow: 0 6px 30px rgba(50, 50, 70, .2);
}

.node-head {
    border-radius: 8px 8px 0 0;
    background: #f1f2f8;
}

.node-title {
    display: flex;
    align-items: center;
    padding: 16px 17px 0 16px;
}

.node-title h1 {
    margin-left: 9px;
    font-size: 16px;
    line-height: 18px;
}

.execute {
    display: flex;
    align-items: center;
    gap: 6px;
    height: 26px;
    margin-left: auto;
    padding: 0 12px;
    border-radius: 4px;
    background: #ff6f5c;
    color: #fff;
    font-weight: 600;
}

.node-tabs {
    display: flex;
    height: 40px;
    font-size: 14px;
    color: #6e7078;
}

.node-tabs button {
    padding: 6px 16px 0;
    border-bottom: 2px solid transparent;
    font-weight: 500;
}

.node-tabs .on {
    border-color: #ff6f5c;
    color: #ff6f5c;
}

.node-tabs a {
    display: flex;
    align-items: center;
    gap: 6px;
    margin-left: auto;
    padding: 4px 16px 0 0;
}

.node-body {
    flex: 1;
    padding: 12px 20px 0;
}

.notice {
    height: 33px;
    padding-left: 9px;
    border: 1px solid #f5d8aa;
    border-left-width: 7px;
    border-radius: 2px;
    background: #fef8f0;
    color: #6e7078;
    line-height: 32px;
}

.notice a {
    color: #ff6f5c;
    font-weight: 600;
}

.field {
    margin-top: 12px;
}

.field label {
    display: block;
    margin-bottom: 2px;
    line-height: 22px;
}

.select-wrap {
    position: relative;
}

.select-wrap select {
    width: 100%;
    height: 30px;
    padding: 0 8px;
    border: 1px solid #d9dde8;
    border-radius: 4px;
    background: #fff;
    appearance: none;
}

.select-wrap svg {
    position: absolute;
    right: 9px;
    top: 9px;
    width: 12px;
    height: 12px;
    color: #8b8c95;
}

.expression {
    position: relative;
    display: flex;
    align-items: center;
    height: 30px;
    border: 1px solid #d9dde8;
    border-radius: 4px 4px 0 4px;
}

.fx {
    width: 23px;
    height: 28px;
    margin-right: 7px;
    border-right: 1px solid #d9dde8;
    border-radius: 4px 0 0 4px;
    background: #f1f2f8;
    color: #6e7078;
    font-family: "Liberation Serif", serif;
    font-size: 14px;
    font-style: italic;
    line-height: 26px;
    text-align: center;
}

.expression input {
    width: 28ch;
    height: 14px;
    background: #d5f3e3;
    color: #3a9f6e;
    font-family: "DejaVu Sans Mono", monospace;
}

.expression button {
    position: absolute;
    right: -1px;
    bottom: -1px;
    padding: 5px;
    border: 1px solid #d9dde8;
    border-radius: 4px 0 0 0;
    background: #fff;
}

.preview {
    height: 20px;
    overflow: hidden;
    color: #6e7078;
    font-family: "DejaVu Sans Mono", "Noto Sans CJK KR", monospace;
    line-height: 22px;
    text-overflow: ellipsis;
    white-space: pre;
}

.toggle {
    display: block;
    width: 40px;
    height: 20px;
    margin: 4px 0 20px;
    padding: 2px;
    border-radius: 10px;
    background: #8f9097;
    appearance: none;
}

.toggle:before {
    content: "";
    display: block;
    width: 16px;
    height: 16px;
    border-radius: 50%;
    background: #fff;
}

.toggle:checked {
    padding-left: 22px;
    background: #3fb67c;
}

.group {
    margin-top: 12px;
}

.group h3 {
    height: 20px;
    border-bottom: 1px solid #d9dde8;
    font-size: 12px;
    font-weight: 500;
    line-height: 16px;
}

.group p {
    margin: 12px 0 10px 16px;
    color: #7d7f87;
    line-height: 20px;
}

.add {
    display: block;
    width: calc(100% - 16px);
    height: 30px;
    margin-left: 16px;
    border: 1px solid #d9dde8;
    border-radius: 4px;
    background: #f1f2f8;
}

.add-select {
    margin-left: 16px;
}

.add-select select {
    background: #f1f2f8;
    text-align-last: center;
}

.model {
    display: flex;
    flex-direction: column;
    align-items: center;
    gap: 7px;
    margin-bottom: -25px;
    color: #7d7f87;
}

.model button {
    display: flex;
    align-items: center;
    justify-content: center;
    width: 48px;
    height: 48px;
    border: 2px solid #ea1f30;
    border-radius: 50%;
    background: #fff;
}

/* Output panel */
.alert {
    margin-left: 8px;
}

.icon-info {
    width: 16px;
    height: 16px;
    margin-left: 8px;
    color: #7d7f87;
}

.logs {
    flex: 1;
    min-width: 0;
    padding: 1px 16px 0;
    overflow: hidden;
}

.error-card {
    padding: 12px 16px 18px;
    border: 1px solid #d9dde8;
    border-radius: 8px;
    background: #fff;
}

.error-card h3 {
    color: #ea1f30;
    font-size: 14px;
    line-height: 20px;
    white-space: nowrap;
}

.error-card p {
    margin: 4px 0 18px;
    color: #7d7f87;
    font-size: 13px;
    line-height: 22px;
    white-space: nowrap;
}

.error-card button {
    display: flex;
    align-items: center;
    gap: 6px;
    height: 28px;
    padding: 0 14px 0 11px;
    border: 1px solid transparent;
    border-radius: 4px;
    background: linear-gradient(#fff, #fff) padding-box, linear-gradient(to right, #5b60e8, #aa7bec, #ec7b8e) border-box;
    font-weight: 500;
}

.error-card span {
    background: linear-gradient(to right, #5b60e8, #aa7bec, #ec7b8e);
    background-clip: text;
    color: transparent;
}

.log-view {
    display: flex;
    justify-content: space-between;
    margin-top: 32px;
}

.tree {
    width: 168px;
    padding-left: 12px;
    color: #ea1f30;
}

.tree-row {
    display: flex;
    align-items: center;
    gap: 8px;
    height: 32px;
}

.tree-row svg {
    color: #414244;
}

.tree-chev {
    width: 10px;
    height: 10px;
}

.tree-row .tree-chev {
    margin: 0 10px 0 auto;
    color: #6e7078;
}

.tree-child {
    display: flex;
    padding-left: 8px;
}

.tree-child i {
    width: 16px;
    height: 16px;
    border: 2px solid #d3d7e3;
    border-width: 0 0 2px 2px;
    border-radius: 0 0 0 8px;
}

.tree-child div {
    flex: 1;
    display: flex;
    align-items: center;
    gap: 8px;
    height: 32px;
    padding-left: 8px;
    border-radius: 4px;
    background: #fdeff0;
}

.tree-child svg, .details-head > svg, .model svg {
    color: #7d7f87;
}

.details {
    width: 143px;
}

.details-head {
    display: flex;
    align-items: center;
    gap: 6px;
    color: #7d7f87;
}

.details h4 {
    width: 100px;
    color: #414244;
    font-size: 14px;
    line-height: 25px;
}

.took {
    width: fit-content;
    padding-right: 6px;
    border-right: 1px solid #6e7078;
    font-size: 13px;
    line-height: 13px;
}

.started {
    width: 99px;
    margin-left: 6px;
    border-right: 1px solid #6e7078;
    font-size: 13px;
    line-height: 13px;
}

.io {
    display: flex;
    gap: 15px;
    margin-top: 31px;
    padding-left: 12px;
    font-size: 14px;
    line-height: 22px;
}

.io svg {
    margin-top: 3px;
}

.details > p {
    margin: 17px 0 0 29px;
    color: #7d7f87;
    font-size: 14px;
    line-height: 21px;
    white-space: nowrap;
}

.wish {
    position: absolute;
    right: 241px;
    bottom: 33px;
    display: flex;
    align-items: center;
    gap: 11px;
    color: #fff;
    font-weight: 600;
    line-height: 18px;
}

.wish svg {
    color: #c5c4cc;
}

/* Toast */
.toast {
    position: absolute;
    right: 16px;
    bottom: 106px;
    display: flex;
    align-items: flex-start;
    width: 330px;
    padding: 14px 15px 14px 14px;
    border-radius: 4px;
    background: #fff;
    box-shadow: 0 2px 12px rgba(50, 50, 70, .15);
    z-index: 3;
}

.toast div {
    flex: 1;
    margin-left: 14px;
}

.toast h2 {
    font-size: 16px;
    font-weight: 600;
    line-height: 20px;
}

.toast p {
    margin-top: 6px;
    font-size: 14px;
    line-height: 21px;
}

.toast button svg {
    width: 16px;
    height: 16px;
    margin-top: 4px;
    color: #8b8c95;
}

.assistant {
    position: absolute;
    right: 16px;
    bottom: 48px;
    z-index: 3;
    width: 42px;
    height: 42px;
    border: 1px solid #d9dde8;
    border-radius: 4px;
    background: #fff;
}

.assistant span {
    display: block;
    width: 16px;
    margin: 0 auto;
    border-radius: 50%;
    background: linear-gradient(to left, #5b60e8, #aa7bec, #ec7b8e);
    color: #fff;
    font-size: 10px;
    font-weight: 700;
    line-height: 16px;
}

/* Taskbar */
.taskbar {
    display: flex;
    height: 40px;
    background: linear-gradient(to right, #20353c, #20353c 40%, #17243f);
    color: #fff;
    font-family: "Noto Sans CJK KR", sans-serif;
}

.start {
    width: 48px;
    padding-left: 16px;
}

.find {
    display: flex;
    align-items: center;
    width: 288px;
    padding: 0 6px 0 11px;
    border: 1px solid #c5c5c5;
    background: #f2f2f2;
}

.find input {
    flex: 1;
    min-width: 0;
    padding-left: 11px;
    font-size: 15px;
}

.find input::placeholder {
    color: #222;
}

.task {
    display: flex;
    align-items: center;
    justify-content: center;
    width: 48px;
    border-bottom: 2px solid transparent;
}

.task.open {
    margin-left: 3px;
    border-color: #76b9ed;
    background: #4b5f67;
}

.task.running {
    width: 40px;
    margin-left: 5px;
    border-color: #76b9ed;
}

.tray {
    display: flex;
    align-items: center;
    gap: 9px;
    margin-left: auto;
    padding-right: 24px;
}

.weather {
    display: flex;
    align-items: center;
    gap: 6px;
    margin-right: 18px;
    font-size: 14px;
}

.moon {
    position: relative;
}

.moon b {
    position: absolute;
    right: 0;
    top: -3px;
    width: 12px;
    border-radius: 50%;
    background: #d13438;
    font-size: 9px;
    line-height: 12px;
    text-align: center;
}

.ime {
    width: 16px;
    margin: 0 8px 0 6px;
    background: #fff;
    color: #111;
    line-height: 16px;
    text-align: center;
}

.clock {
    margin-right: 9px;
    font-size: 13px;
    line-height: 18px;
    text-align: center;
}
```
